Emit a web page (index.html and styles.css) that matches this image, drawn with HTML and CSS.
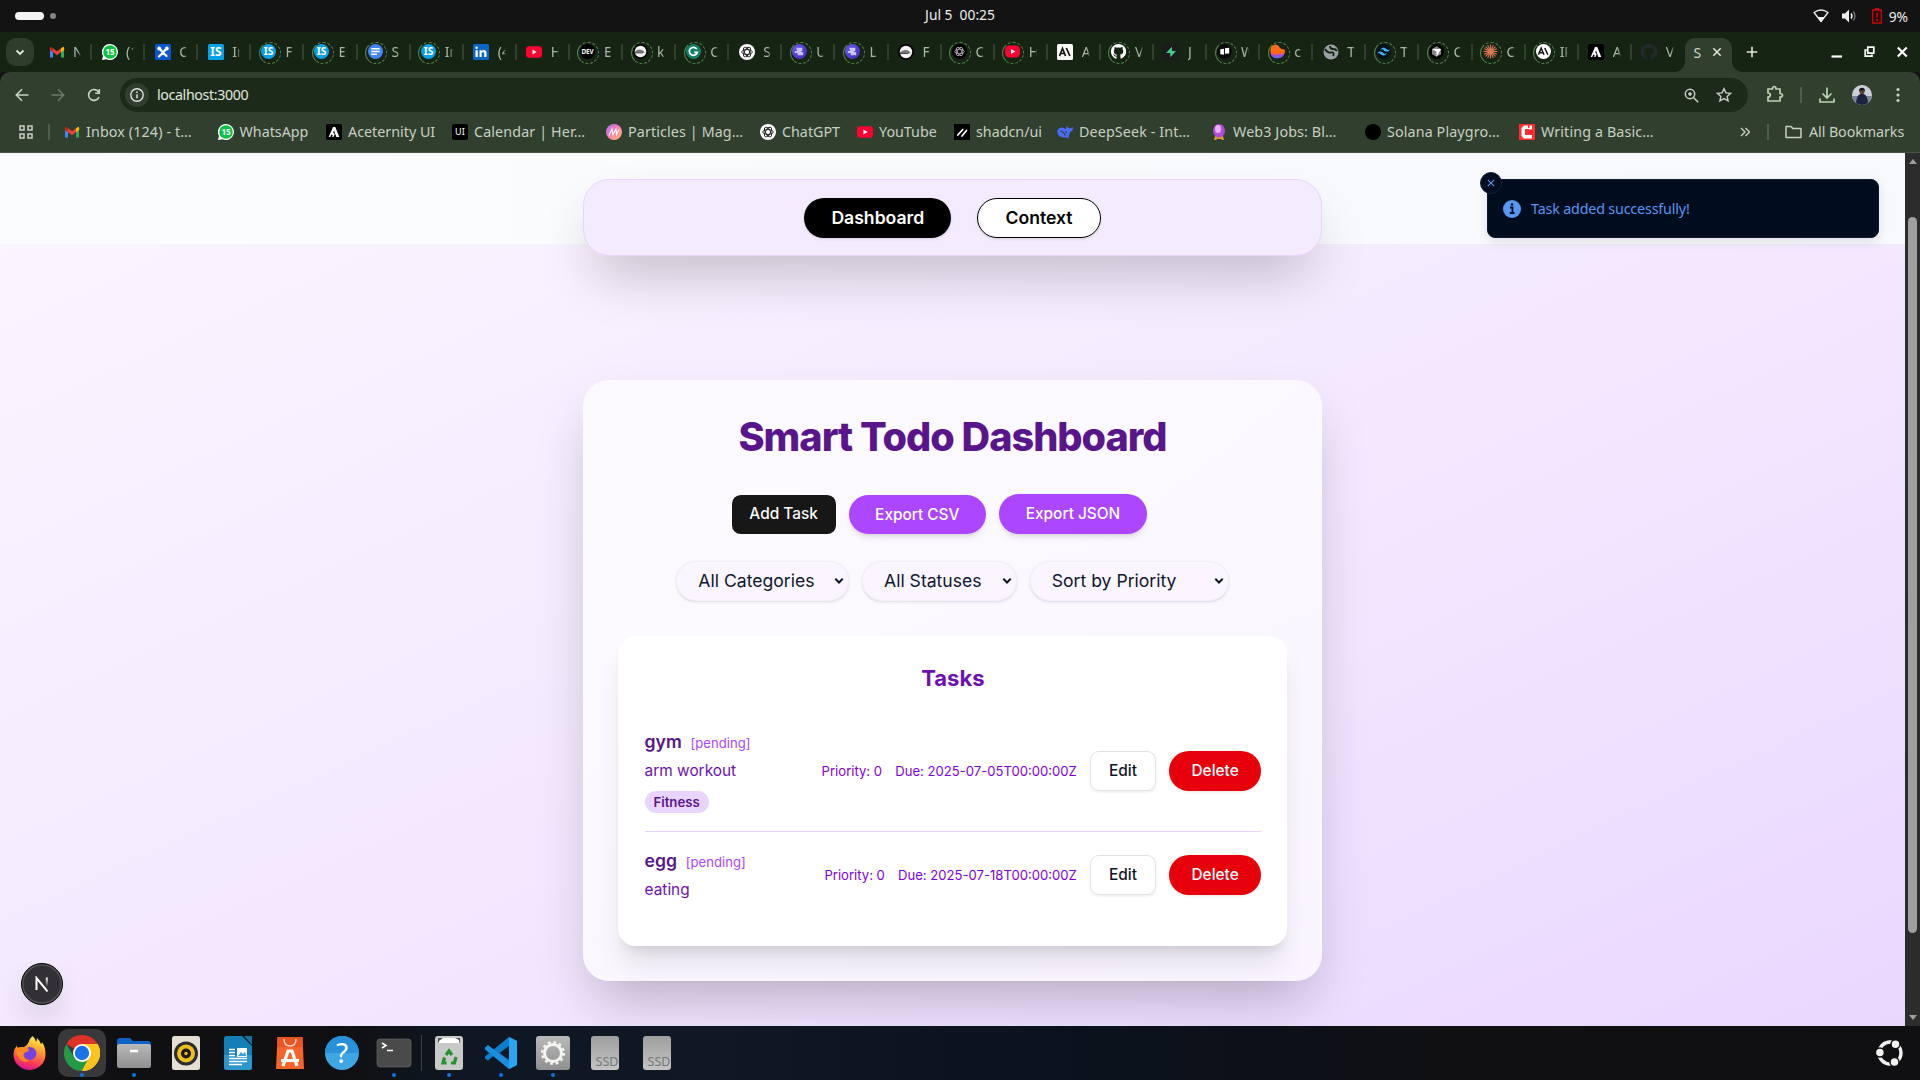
FILE: index.html
```html
<!DOCTYPE html>
<html lang="en">
<head>
<meta charset="utf-8">
<title>Smart Todo</title>
<link rel="stylesheet" href="styles.css">
</head>
<body>
<svg class="paints" aria-hidden="true">
  <defs>
    <linearGradient id="g-fire" x1="0.7" y1="0" x2="0.4" y2="1"><stop offset="0" stop-color="#fff44f"/><stop offset=".4" stop-color="#ff9a2b"/><stop offset=".75" stop-color="#ff4052"/><stop offset="1" stop-color="#d6129b"/></linearGradient>
    <linearGradient id="g-grey" x1="0" y1="0" x2="0" y2="1"><stop offset="0" stop-color="#b9b9b9"/><stop offset="1" stop-color="#8f8f8f"/></linearGradient>
    <linearGradient id="g-disk" x1="0" y1="0" x2="0" y2="1"><stop offset="0" stop-color="#9e9e9e"/><stop offset="1" stop-color="#c4c4c4"/></linearGradient>
    <linearGradient id="g-magic" x1="0" y1="0" x2="1" y2="1"><stop offset="0" stop-color="#a070ff"/><stop offset=".5" stop-color="#ff7fb0"/><stop offset="1" stop-color="#ffc060"/></linearGradient>
    <linearGradient id="g-flame" x1="0" y1="0" x2="0" y2="1"><stop offset="0" stop-color="#ff2fa0"/><stop offset="1" stop-color="#5a6bff"/></linearGradient>
    <linearGradient id="g-violet" x1="0" y1="0" x2="1" y2="1"><stop offset="0" stop-color="#6f5cf0"/><stop offset="1" stop-color="#3d24b8"/></linearGradient>
    <linearGradient id="g-n" x1="0" y1="0" x2="0" y2="1"><stop offset="0" stop-color="#fff"/><stop offset="1" stop-color="#fff" stop-opacity="0"/></linearGradient>
  </defs>
</svg>
<svg class="sprite" aria-hidden="true">
  <symbol id="gmail" viewBox="0 0 16 16"><path d="M1 4v9.500h3V7z" fill="#4285f4"/><path d="M15 4v9.500h-3V7z" fill="#34a853"/><path d="M12 4.500 14 2.700q1.200 0 1.200 1.800V6L12 8z" fill="#fbbc04"/><path d="M4 4.500 2 2.700Q.8 2.700.8 4.500V6L4 8z" fill="#c5221f"/><path d="M4 4.200 8 7.300l4-3.100V8l-4 3.200L4 8z" fill="#ea4335"/></symbol>
  <symbol id="whatsapp" viewBox="0 0 16 16"><path d="M8 0a8 8 0 1 1-3.500 15.200L0 16l1-4A8 8 0 0 1 8 0z" fill="#fff"/><circle cx="8" cy="8" r="6.800" fill="#0cc143"/><text x="8" y="11" text-anchor="middle" font-size="8" font-weight="700" fill="#fff">15</text></symbol>
  <symbol id="bluex" viewBox="0 0 16 16"><rect width="16" height="16" rx="1.500" fill="#0b57d0"/><path d="M4.500 4.500 8 8.500l-4 4M11.500 4.500 8 8.500l3.500 3.500" fill="none" stroke="#fff" stroke-width="2.200" stroke-linecap="round"/><circle cx="4.200" cy="4.500" r="1.900" fill="#fff"/><circle cx="11.800" cy="4.500" r="1.900" fill="#fff"/></symbol>
  <symbol id="is" viewBox="0 0 16 16"><rect width="16" height="16" rx="1.500" fill="#06a1ea"/><text x="8" y="12.300" text-anchor="middle" font-size="12" font-weight="700" fill="#fff">IS</text></symbol>
  <symbol id="isr" viewBox="0 0 16 16"><circle cx="8" cy="8" r="8" fill="#06a1ea"/><text x="8" y="12" text-anchor="middle" font-size="11" font-weight="700" fill="#fff">IS</text></symbol>
  <symbol id="doc" viewBox="0 0 16 16"><circle cx="8" cy="8" r="8" fill="#4285f4"/><path d="M3.500 5h9M3.500 8h9M3.500 11h6" stroke="#fff" stroke-width="1.700"/></symbol>
  <symbol id="linkedin" viewBox="0 0 16 16"><rect width="16" height="16" rx="1.500" fill="#0a66c2"/><path d="M2.500 6.200h2.300V13H2.500zM6.500 6.200h2.200v1q.8-1.200 2.300-1.200 2.500 0 2.500 3V13h-2.300V9.500q0-1.500-1.200-1.500-1.300 0-1.300 1.600V13H6.500z" fill="#fff"/><circle cx="3.600" cy="3.800" r="1.300" fill="#fff"/></symbol>
  <symbol id="youtube" viewBox="0 0 16 16"><rect y="2.300" width="16" height="11.500" rx="3" fill="#ff0033"/><path d="M6.500 5.600v4.800L10.700 8z" fill="#fff"/></symbol>
  <symbol id="youtuber" viewBox="0 0 16 16"><rect x="0" y="1.500" width="16" height="13" rx="4.500" fill="#ff0033"/><path d="M6.300 5.300v5.400L11 8z" fill="#fff"/></symbol>
  <symbol id="dev" viewBox="0 0 16 16"><circle cx="8" cy="8" r="8" fill="#000"/><text x="8" y="11" text-anchor="middle" font-size="8" font-weight="700" fill="#fff" textLength="13" lengthAdjust="spacingAndGlyphs">DEV</text></symbol>
  <symbol id="bot" viewBox="0 0 16 16"><circle cx="8" cy="8" r="8" fill="#050505"/><circle cx="8" cy="8" r="6.200" fill="#f2f2f2"/><path d="M1.900 9.200V8.500Q4 5.500 8.500 6q2.800.3 4.300 3.200z" fill="#777"/><path d="M2 9.500h8.500" stroke="#222" stroke-width=".8"/></symbol>
  <symbol id="grammarly" viewBox="0 0 16 16"><circle cx="8" cy="8" r="8" fill="#11806a"/><path d="M11.500 5.500A4.300 4.300 0 1 0 12 9H8.800" fill="none" stroke="#fff" stroke-width="1.800"/></symbol>
  <symbol id="gpt" viewBox="0 0 16 16"><circle cx="8" cy="8" r="8" fill="#fff"/><g fill="none" stroke="#222" stroke-width=".9"><ellipse cx="8" cy="8" rx="5.300" ry="2.500"/><ellipse cx="8" cy="8" rx="5.300" ry="2.500" transform="rotate(60 8 8)"/><ellipse cx="8" cy="8" rx="5.300" ry="2.500" transform="rotate(120 8 8)"/></g></symbol>
  <symbol id="gptd" viewBox="0 0 16 16"><circle cx="8" cy="8" r="8" fill="#000"/><g fill="none" stroke="#bbb" stroke-width=".9"><ellipse cx="8" cy="8" rx="5" ry="2.300"/><ellipse cx="8" cy="8" rx="5" ry="2.300" transform="rotate(60 8 8)"/><ellipse cx="8" cy="8" rx="5" ry="2.300" transform="rotate(120 8 8)"/></g></symbol>
  <symbol id="linear" viewBox="0 0 16 16"><circle cx="8" cy="8" r="8" fill="url(#g-violet)"/><path d="M4.500 4h6.500v3.500H9l3 1.500v3H6V9.500H3V7.500h2.500z" fill="#c9c4ff"/></symbol>
  <symbol id="anthropic" viewBox="0 0 16 16"><rect width="16" height="16" rx="1.500" fill="#faf9f5"/><path d="M2.500 12 5.500 4.500 8.500 12M3.700 9.500h3.600M9.300 4l3.600 8" fill="none" stroke="#141413" stroke-width="1.700"/></symbol>
  <symbol id="anthropicr" viewBox="0 0 16 16"><circle cx="8" cy="8" r="8" fill="#fff"/><path d="M2.500 11.500 5.500 4.500 8.500 11.500M3.700 9.300h3.600M9.300 4.300l3.400 7.200" fill="none" stroke="#141413" stroke-width="1.600"/></symbol>
  <symbol id="github" viewBox="0 0 16 16"><path d="M8 0a8 8 0 0 0-2.600 15.600c.4.100.6-.2.600-.4v-1.900c-2 .3-2.700-.7-2.900-1.400-.2-.4-.5-.8-.9-1 .8-.2 1.400.3 1.800.9.600.9 1.400.8 2 .6.100-.4.300-.8.500-1C4.500 11 3 10 3 7.600c0-.9.300-1.600.8-2.200-.1-.3-.3-1.100.1-2.200 0 0 .8-.2 2.200.8a7.600 7.600 0 0 1 3.900 0c1.400-1 2.200-.8 2.200-.8.400 1.100.2 1.900.1 2.200.5.600.8 1.300.8 2.200 0 2.400-1.500 3.400-3.500 3.700.3.300.5.700.5 1.500v2.400c0 .2.200.5.600.4A8 8 0 0 0 8 0z" fill="currentColor"/></symbol>
  <symbol id="supabase" viewBox="0 0 16 16"><rect width="16" height="16" rx="1" fill="#1c1c1c"/><path d="M9 2.700v4.300h4L7.300 13.300V9H3z" fill="#3ecf8e"/></symbol>
  <symbol id="boxes" viewBox="0 0 16 16"><circle cx="8" cy="8" r="8" fill="#0b0b0b"/><path d="M3.500 5.500 7.500 5v6.500l-4-.5zM8.500 4.500l4.500-.5v6l-4.500.5z" fill="#fff"/></symbol>
  <symbol id="flame" viewBox="0 0 16 16"><path d="M1 8h15a8 8 0 0 1-15.500 2z" fill="url(#g-flame)"/><path d="M1 10Q-1 3 4 1q3-1.500 5.500 1.500Q11 6 16 6q0 5-5 4.500-5 1.500-10-.5z" fill="#ff6a1a"/></symbol>
  <symbol id="globe" viewBox="0 0 16 16"><circle cx="8" cy="8" r="7.500" fill="#9aa0a6"/><path d="M2 5q2 4 6 3.500T10 12M7 2q0 3 3 3t4 2" fill="none" stroke="#162413" stroke-width="1.800"/></symbol>
  <symbol id="tailwind" viewBox="0 0 16 16"><circle cx="8" cy="8" r="8" fill="#07121c"/><path transform="translate(1.200 1.200) scale(.57)" fill="#38bdf8" d="M12 4.800c-3.200 0-5.200 1.600-6 4.800 1.200-1.600 2.600-2.200 4.200-1.800.913.228 1.565.89 2.288 1.624C13.666 10.618 15.027 12 18 12c3.200 0 5.200-1.600 6-4.800-1.200 1.600-2.600 2.200-4.200 1.800-.913-.228-1.565-.89-2.288-1.624C16.337 6.182 14.976 4.800 12 4.800zM6 12c-3.200 0-5.200 1.600-6 4.800 1.200-1.600 2.600-2.200 4.200-1.800.913.228 1.565.89 2.288 1.624C7.666 17.818 9.027 19.200 12 19.200c3.200 0 5.200-1.600 6-4.800-1.200 1.600-2.600 2.200-4.200 1.800-.913-.228-1.565-.89-2.288-1.624C10.337 13.382 8.976 12 6 12z"/></symbol>
  <symbol id="cursor" viewBox="0 0 16 16"><circle cx="8" cy="8" r="8" fill="#000"/><path d="m8 2.500 4.800 2.700v5.600L8 13.500l-4.800-2.700V5.200z" fill="#888"/><path d="M3.200 5.200h9.600L8 13.500V8z" fill="#fff"/></symbol>
  <symbol id="claude" viewBox="0 0 16 16"><g stroke="#d97757" stroke-width="1.200"><path d="M8 .5v15M.5 8h15M2.700 2.700l10.600 10.600M13.300 2.700 2.700 13.300M5 1.200l6 13.600M11 1.200 5 14.800M1.200 5l13.600 6M14.800 5 1.200 11"/></g></symbol>
  <symbol id="acet" viewBox="0 0 16 16"><rect width="16" height="16" rx="2" fill="#000"/><path d="M7 3h2.300l4 10h-3L8 6.500l-.8 2 1.500 1.500L7.500 13H6.200l.5-1.800-1.500-.7-.9 2.500H2.700z" fill="#fff"/></symbol>
  <symbol id="ui" viewBox="0 0 16 16"><rect width="16" height="16" rx="2.500" fill="#000"/><text x="8" y="11.200" text-anchor="middle" font-size="9" fill="#fff">UI</text></symbol>
  <symbol id="magic" viewBox="0 0 16 16"><circle cx="8" cy="8" r="8" fill="url(#g-magic)"/><path d="M3 11.500 6 5 7 10.500 10 5l.5 5.500L13 5.500" fill="none" stroke="#fff" stroke-width="1.100"/></symbol>
  <symbol id="shadcn" viewBox="0 0 16 16"><rect width="16" height="16" rx="1" fill="#000"/><path d="m3.800 11 5-5.500M8 12l4.500-5.500" stroke="#fff" stroke-width="1.700" stroke-linecap="round"/></symbol>
  <symbol id="deepseek" viewBox="0 0 16 16"><path d="M.3 6.500Q2 3 6 3.700q1.500.3 2.500 1.800Q9.500 3 10 2q.8 1.800 2.500 2.300Q14.500 4.500 16 3q0 4.500-3 5-.3 3-1.800 4 .8.500 1.300 1.500-2 .7-3.500-.3-3 1-5.700-.7Q0 10.500.3 6.500z" fill="#4d6bfe"/><path d="M3.500 7q3 .5 5 4.500M8.500 7.500l1.500 1" fill="none" stroke="#303f2e" stroke-width="1.100"/></symbol>
  <symbol id="crystal" viewBox="0 0 16 16"><path d="M4 12h8l1 4h-2.500v-1h-5v1H3z" fill="#d69a35"/><ellipse cx="8" cy="6.800" rx="6" ry="6.800" fill="#b24bd6"/><ellipse cx="7" cy="5" rx="3" ry="4" fill="#eab0f5"/></symbol>
  <symbol id="dot" viewBox="0 0 16 16"><circle cx="8" cy="8" r="8" fill="#000"/></symbol>
  <symbol id="redc" viewBox="0 0 16 16"><rect width="16" height="16" fill="#ff2d2d"/><path d="M13 1.500v4h-3V5H6v6h7v3.500H5L2.500 12V4L5 1.500h4V4h1.500V1.500z" fill="#fff"/></symbol>
</svg>

<header class="topbar">
  <div class="workspaces"><i class="pill"></i><i class="spot"></i></div>
  <div class="clock">Jul 5&nbsp; 00:25</div>
  <div class="status">
    <svg width="16" height="16" viewBox="0 0 16 16"><path d="M1 4.500Q8-.5 15 4.500L8 13.500z" fill="none" stroke="#eee" stroke-width="1.300" stroke-linejoin="round"/><path d="m4.500 9 3.500 5 3.500-5z" fill="#eee"/></svg>
    <svg width="16" height="16" viewBox="0 0 16 16"><path d="M1 5.500h3L8 1.500v13L4 10.500H1z" fill="#eee"/><path d="M10 5.500q2 2.500 0 5" fill="none" stroke="#eee" stroke-width="1.500"/><path d="M12.300 3.500q3.500 4.500 0 9" fill="none" stroke="#777" stroke-width="1.300"/></svg>
    <svg width="10" height="16" viewBox="0 0 10 16"><path d="M.7 2h8.600v13H.7zM3 .7h4" fill="#2c0404" stroke="#c50808" stroke-width="1.300"/><path d="M5 4.500v5M5 11v2" stroke="#c50808" stroke-width="1.700"/></svg>
    <span>9%</span>
  </div>
</header>

<div class="tabstrip">
  <div class="tabsearch"><svg width="10" height="10" viewBox="0 0 10 10"><path d="m1.500 3.500 3.500 3.500 3.500-3.500" fill="none" stroke="#dfe8da" stroke-width="1.800"/></svg></div>
  <div class="tabs">
    <div class="tab"><svg><use href="#gmail"/></svg><b>N</b></div>
    <div class="tab"><svg><use href="#whatsapp"/></svg><b>(1</b></div>
    <div class="tab"><svg><use href="#bluex"/></svg><b>C</b></div>
    <div class="tab"><svg><use href="#is"/></svg><b>In</b></div>
    <div class="tab idle"><svg><use href="#isr"/></svg><b>F</b></div>
    <div class="tab idle"><svg><use href="#isr"/></svg><b>E</b></div>
    <div class="tab idle"><svg><use href="#doc"/></svg><b>S</b></div>
    <div class="tab idle"><svg><use href="#isr"/></svg><b>In</b></div>
    <div class="tab"><svg><use href="#linkedin"/></svg><b>(4</b></div>
    <div class="tab"><svg><use href="#youtube"/></svg><b>H</b></div>
    <div class="tab idle"><svg><use href="#dev"/></svg><b>E</b></div>
    <div class="tab idle"><svg><use href="#bot"/></svg><b>k</b></div>
    <div class="tab idle"><svg><use href="#grammarly"/></svg><b>C</b></div>
    <div class="tab"><svg><use href="#gpt"/></svg><b>S</b></div>
    <div class="tab idle"><svg><use href="#linear"/></svg><b>U</b></div>
    <div class="tab idle"><svg><use href="#linear"/></svg><b>L</b></div>
    <div class="tab"><svg><use href="#bot"/></svg><b>F</b></div>
    <div class="tab idle"><svg><use href="#gptd"/></svg><b>C</b></div>
    <div class="tab idle"><svg><use href="#youtuber"/></svg><b>H</b></div>
    <div class="tab"><svg><use href="#anthropic"/></svg><b>A</b></div>
    <div class="tab idle white"><svg><use href="#github"/></svg><b>V</b></div>
    <div class="tab"><svg><use href="#supabase"/></svg><b>J</b></div>
    <div class="tab idle"><svg><use href="#boxes"/></svg><b>W</b></div>
    <div class="tab idle"><svg><use href="#flame"/></svg><b>c</b></div>
    <div class="tab"><svg><use href="#globe"/></svg><b>T</b></div>
    <div class="tab idle"><svg><use href="#tailwind"/></svg><b>T</b></div>
    <div class="tab idle"><svg><use href="#cursor"/></svg><b>C</b></div>
    <div class="tab idle"><svg><use href="#claude"/></svg><b>C</b></div>
    <div class="tab idle"><svg><use href="#anthropicr"/></svg><b>IP</b></div>
    <div class="tab"><svg><use href="#acet"/></svg><b>A</b></div>
    <div class="tab dark last"><svg><use href="#github"/></svg><b>V</b></div>
  </div>
  <div class="tab-active"><b>S</b><svg width="10" height="10" viewBox="0 0 10 10"><path d="m1.300 1.300 7.400 7.400m0-7.400-7.400 7.400" stroke="#dfe8da" stroke-width="1.500"/></svg></div>
  <svg class="newtab" width="12" height="12" viewBox="0 0 12 12"><path d="M6 .7v10.600M.7 6h10.600" stroke="#dfe8da" stroke-width="1.600"/></svg>
  <div class="winctl">
    <svg width="12" height="12" viewBox="0 0 12 12"><path d="M.5 10.500h10.500" stroke="#fff" stroke-width="2.200"/></svg>
    <svg width="12" height="12" viewBox="0 0 12 12"><path d="M3.800 1.200h6v6h-6zM3 4H1.200v6.200H8V8.500" fill="none" stroke="#fff" stroke-width="1.700"/></svg>
    <svg width="12" height="12" viewBox="0 0 12 12"><path d="m1.800 1.500 9 9m0-9-9 9" stroke="#fff" stroke-width="2.200"/></svg>
  </div>
</div>

<div class="toolbar">
  <div class="navbtns">
    <svg width="14" height="14" viewBox="0 0 14 14"><path d="M13.500 7H1.500M7 1.300 1.300 7 7 12.700" fill="none" stroke="#c5d5bf" stroke-width="1.600"/></svg>
    <svg width="14" height="14" viewBox="0 0 14 14"><path d="M.5 7h12M7 1.300 12.700 7 7 12.700" fill="none" stroke="#6b7a68" stroke-width="1.600"/></svg>
    <svg width="14" height="14" viewBox="0 0 14 14"><path d="M12 9a5.400 5.400 0 1 1-.5-5M12.300 1v4.200H8.200" fill="none" stroke="#c5d5bf" stroke-width="1.600"/></svg>
  </div>
  <div class="omnibox">
    <span class="info"><svg width="14" height="14" viewBox="0 0 14 14"><circle cx="7" cy="7" r="6.200" fill="none" stroke="#dfe5db" stroke-width="1.400"/><path d="M7 6.200v4M7 3.500v1.400" stroke="#dfe5db" stroke-width="1.500"/></svg></span>
    <span class="url">localhost:3000</span>
    <svg class="mag" width="15" height="15" viewBox="0 0 15 15"><circle cx="6" cy="6" r="4.700" fill="none" stroke="#c9cfc4" stroke-width="1.500"/><path d="m9.500 9.500 4.700 4.700M6 4v4M4 6h4" stroke="#c9cfc4" stroke-width="1.500"/></svg>
    <svg width="16" height="16" viewBox="0 0 16 16"><path d="m8 1.700 1.900 4.200 4.600.5-3.400 3 1 4.500L8 11.600l-4.100 2.300 1-4.500-3.400-3 4.600-.5z" fill="none" stroke="#c9cfc4" stroke-width="1.400"/></svg>
  </div>
  <svg class="ext" width="18" height="18" viewBox="0 0 18 18"><path d="M2 4h4.500q0-2.500 1.700-2.500T10 4h4v4.500q2.500 0 2.500 1.700T14 12v4H2v-4q2.300 0 2.300-2T2 8z" fill="none" stroke="#b9d3b2" stroke-width="1.700"/></svg>
  <i class="bar"></i>
  <svg class="dl" width="16" height="16" viewBox="0 0 16 16"><path d="M8 .5v10M3.500 6.500 8 11l4.500-4.500M1 11.500V15h14v-3.500" fill="none" stroke="#b9d3b2" stroke-width="1.700"/></svg>
  <svg class="avatar" width="20" height="20" viewBox="0 0 20 20"><clipPath id="av"><circle cx="10" cy="10" r="10"/></clipPath><g clip-path="url(#av)"><path d="M0 0h20v20H0z" fill="#cbd0d8"/><path d="M0 11h20v9H0z" fill="#7b8496"/><path d="M4 20q0-10 4.500-11h3Q16 10 16 20z" fill="#1d2440"/><circle cx="10" cy="6.500" r="2.600" fill="#5b4038"/><path d="M7 6q0-3.300 3-3.300T13 6q-3-1.500-6 0z" fill="#15151a"/></g></svg>
  <svg class="more" width="4" height="16" viewBox="0 0 4 16"><g fill="#c5d5bf"><circle cx="2" cy="2.500" r="1.600"/><circle cx="2" cy="8" r="1.600"/><circle cx="2" cy="13.500" r="1.600"/></g></svg>
</div>

<div class="bookmarks">
  <svg class="apps" width="14" height="14" viewBox="0 0 14 14"><path d="M1 1h4v4H1zM9 1h4v4H9zM1 9h4v4H1zM9 9h4v4H9z" fill="none" stroke="#c9cfc4" stroke-width="1.500"/></svg>
  <i class="bar"></i>
  <div class="marks">
    <a class="long"><svg><use href="#gmail"/></svg>Inbox (124) - t…</a>
    <a><svg><use href="#whatsapp"/></svg>WhatsApp</a>
    <a><svg><use href="#acet"/></svg>Aceternity UI</a>
    <a class="long"><svg><use href="#ui"/></svg>Calendar | Her…</a>
    <a class="long"><svg><use href="#magic"/></svg>Particles | Mag…</a>
    <a><svg><use href="#gpt"/></svg>ChatGPT</a>
    <a><svg><use href="#youtube"/></svg>YouTube</a>
    <a><svg><use href="#shadcn"/></svg>shadcn/ui</a>
    <a class="long"><svg><use href="#deepseek"/></svg>DeepSeek - Int…</a>
    <a class="long"><svg><use href="#crystal"/></svg>Web3 Jobs: Bl…</a>
    <a class="long"><svg><use href="#dot"/></svg>Solana Playgro…</a>
    <a class="long"><svg><use href="#redc"/></svg>Writing a Basic…</a>
  </div>
  <svg class="chev" width="10" height="10" viewBox="0 0 10 10"><path d="m1 1 4 4-4 4m4.500-8 4 4-4 4" fill="none" stroke="#c9cfc4" stroke-width="1.400"/></svg>
  <i class="bar"></i>
  <svg class="folder" width="17" height="14" viewBox="0 0 17 14"><path d="M1 1.500h5l1.700 2H16v9H1z" fill="none" stroke="#c9cfc4" stroke-width="1.500" stroke-linejoin="round"/></svg>
  <span class="allb">All Bookmarks</span>
</div>

<div class="viewport">
  <div class="page">
    <div class="head"></div>
    <main class="canvas">
      <nav class="pagenav"><a class="on">Dashboard</a><a class="off">Context</a></nav>
      <section class="card">
        <h1>Smart Todo Dashboard</h1>
        <div class="actions"><button class="add">Add Task</button><button class="export csv">Export CSV</button><button class="export json">Export JSON</button></div>
        <div class="filters">
          <div class="select cat">All Categories<svg width="10" height="8" viewBox="0 0 10 8"><path d="m1.300 1.800 3.700 3.700 3.700-3.700" fill="none" stroke="#0f172b" stroke-width="2"/></svg></div>
          <div class="select stat">All Statuses<svg width="10" height="8" viewBox="0 0 10 8"><path d="m1.300 1.800 3.700 3.700 3.700-3.700" fill="none" stroke="#0f172b" stroke-width="2"/></svg></div>
          <div class="select sort">Sort by Priority<svg width="10" height="8" viewBox="0 0 10 8"><path d="m1.300 1.800 3.700 3.700 3.700-3.700" fill="none" stroke="#0f172b" stroke-width="2"/></svg></div>
        </div>
        <div class="tasks">
          <h2>Tasks</h2>
          <div class="task">
            <div class="what"><div class="name">gym<span>[pending]</span></div><div class="desc">arm workout</div><div class="tag">Fitness</div></div>
            <div class="meta"><span>Priority: 0</span><span>Due: 2025-07-05T00:00:00Z</span><button class="edit">Edit</button><button class="del">Delete</button></div>
          </div>
          <div class="task">
            <div class="what"><div class="name">egg<span>[pending]</span></div><div class="desc">eating</div></div>
            <div class="meta"><span>Priority: 0</span><span>Due: 2025-07-18T00:00:00Z</span><button class="edit">Edit</button><button class="del">Delete</button></div>
          </div>
        </div>
      </section>
    </main>
    <div class="toast">
      <span class="close"><svg width="8" height="8" viewBox="0 0 8 8"><path d="m.8.8 6.400 6.400m0-6.400L.8 7.200" stroke="#5896f3" stroke-width="1.100"/></svg></span>
      <svg width="18" height="18" viewBox="0 0 18 18"><circle cx="9" cy="9" r="9" fill="#5896f3"/><path d="M7 7.500h2.500v5.300M6.800 13h4.700" fill="none" stroke="#000d1f" stroke-width="1.800"/><circle cx="9" cy="4.500" r="1.200" fill="#000d1f"/></svg>
      <span class="msg">Task added successfully!</span>
    </div>
    <div class="nextdev"><svg width="14" height="16" viewBox="0 0 14 16"><path d="M1.500 14V2L12.500 15.500" fill="none" stroke="#fff" stroke-width="2"/><path d="M10.800 1.500h2V11h-2z" fill="url(#g-n)"/></svg></div>
  </div>
  <div class="scrollbar"><i class="up"></i><i class="thumb"></i><i class="down"></i></div>
</div>

<footer class="dock">
  <div class="app"><svg viewBox="0 0 36 36"><path d="M20.500 1q2.500 2 3.500 6 1-2 1-4 3 3 4 6 1-.5 1-2 3.500 5 3.500 12a16 15.500 0 1 1-32 1q0-6 3.500-9.500 0 2 1 3 3-2 6-1.500 3-1 4.500-4.500 1-4 4-6.500z" fill="url(#g-fire)"/><circle cx="18" cy="18.500" r="6.500" fill="#7542e5"/><path d="M4 13q7-2 11 0 3 1 1 3.500-4 .5-5 3.500 1 5 7 5.500-7 3.500-11-2.500-3-4-3-10z" fill="#ff8a1f"/></svg></div>
  <div class="app focus run"><svg viewBox="0 0 36 36"><path d="M18 18 2.400 9A18 18 0 0 1 33.600 9z" fill="#dd3227"/><path d="M18 18V9h15.600A18 18 0 0 1 18 36z" fill="#fcc31c"/><path d="M18 36A18 18 0 0 1 2.400 9l7.800 13.500L18 27l7-5z" fill="#249a47"/><path d="M25.800 22.500 18 36A18 18 0 0 0 33.600 9H18z" fill="#fcc31c"/><circle cx="18" cy="18" r="9" fill="#fff"/><circle cx="18" cy="18" r="7.200" fill="#1a73e8"/></svg></div>
  <div class="app run"><svg viewBox="0 0 36 36"><path d="M1 6q0-3 3-3h10l3 3h15q3 0 3 3v8H1z" fill="#0d62c5"/><rect x="1" y="9" width="34" height="24" rx="2.500" fill="url(#g-grey)"/><path d="M14 16h8" stroke="#fff" stroke-width="2.500"/></svg></div>
  <div class="app"><svg viewBox="0 0 36 36"><rect x="4" y="1" width="28" height="34" rx="2.500" fill="#e4ded3"/><circle cx="18" cy="18.500" r="12" fill="#2c2c2c"/><circle cx="18" cy="18.500" r="9" fill="#efbf1e"/><circle cx="18" cy="18.500" r="5" fill="#1c1a14"/><circle cx="18" cy="18.500" r="1.700" fill="#efbf1e"/></svg></div>
  <div class="app"><svg viewBox="0 0 36 36"><path d="M6.500 1H22l10 10v21.500q0 2.500-2.500 2.500h-23Q4 35 4 32.500v-29Q4 1 6.500 1z" fill="#147fb4"/><path d="M4 20h28v12q0 3-3 3H7q-3 0-3-3z" fill="#2d97cc"/><path d="M24 1h8v9z" fill="#1672a5"/><path d="M9 14.500h6M9 17.500h6M9 20.500h6M9 23.500h18M9 26.500h18M9 29.500h13" stroke="#fff" stroke-width="1.600"/><path d="M17 13h10v9H17z" fill="#fff"/><path d="m18 21 3-4 2 2 2-2 1.500 4z" fill="#36a3dc"/></svg></div>
  <div class="app"><svg viewBox="0 0 36 36"><path d="M5.500 2h25L32 34H4z" fill="#f4652c"/><path d="M5.500 2h25l.5 10H5z" fill="#e95420"/><path d="M12 4q0 7 6 7t6-7" fill="none" stroke="#fbd0be" stroke-width="1.600"/><path d="m11 31 5-15h4l5 15M9 25.500h18" fill="none" stroke="#fff" stroke-width="3.200"/></svg></div>
  <div class="app"><svg viewBox="0 0 36 36"><circle cx="18" cy="18" r="17" fill="#40a5e3"/><path d="M1 18a17 17 0 0 1 34 0z" fill="#2790d9"/><text x="18" y="28" text-anchor="middle" font-size="28" fill="#fff">?</text></svg></div>
  <div class="app run"><svg viewBox="0 0 36 36"><rect x="1" y="4" width="34" height="28" rx="3" fill="#4a4a4a" stroke="#666" stroke-width=".7"/><path d="m6 8 4 2.500L6 13M11 15.500h6" fill="none" stroke="#fff" stroke-width="1.600"/></svg></div>
  <i class="rule"></i>
  <div class="app run"><svg viewBox="0 0 36 36"><rect x="4" y="1" width="28" height="34" rx="3" fill="#c9c9c9"/><path d="M7 3h22v4.500H7z" fill="#555"/><path d="m8 6 4-3h12l4 2v3H8z" fill="#fff"/><g fill="none" stroke="#23912f" stroke-width="3.200"><path d="m15 20 3-4 3 4M25 22l-1.500 6H20M15.500 28H12l1.500-5.500"/></g></svg></div>
  <div class="app run"><svg viewBox="0 0 36 36"><path d="M26 2 34 6v24l-8 4L11 20.500 5 25.500l-3-2v-2L26 2z" fill="#0d7fca"/><path d="m2 12.500 3-2.500 21 16.500V34L2 14.500z" fill="#1b8ede"/><path d="m26 2 8 4v24l-8 4z" fill="#29a5f4"/><path d="M26 11v14l-9.500-7z" fill="#101a27"/></svg></div>
  <div class="app run"><svg viewBox="0 0 36 36"><rect x="1" y="1" width="34" height="34" rx="3" fill="url(#g-grey)"/><circle cx="18" cy="18" r="8.500" fill="none" stroke="#f5f5f2" stroke-width="3"/><circle cx="18" cy="18" r="10.800" fill="none" stroke="#f5f5f2" stroke-width="2.500" stroke-dasharray="2.830 2.830"/></svg></div>
  <div class="app"><svg viewBox="0 0 36 36"><rect x="4" y="1" width="28" height="34" rx="3" fill="url(#g-disk)"/><text x="20" y="31" text-anchor="middle" font-size="12.500" fill="#777">SSD</text></svg></div>
  <div class="app"><svg viewBox="0 0 36 36"><rect x="4" y="1" width="28" height="34" rx="3" fill="url(#g-disk)"/><text x="20" y="31" text-anchor="middle" font-size="12.500" fill="#777">SSD</text></svg></div>
  <svg class="ubuntu" width="28" height="28" viewBox="0 0 28 28"><circle cx="14" cy="14" r="11" fill="none" stroke="#f2f2f2" stroke-width="3.400"/><g fill="#f2f2f2" stroke="#101012" stroke-width="1.500"><circle cx="3.900" cy="13.500" r="4.500"/><circle cx="19.500" cy="5.200" r="4.500"/><circle cx="18.500" cy="23" r="4.500"/></g></svg>
</footer>
</body>
</html>
```
FILE: styles.css
```css
* { box-sizing: border-box; }
body { margin: 0; width: 1920px; height: 1080px; overflow: hidden; display: flex; flex-direction: column; font-family: "Noto Sans", sans-serif; background: #131313; }
svg { display: block; flex: none; }
i { display: block; flex: none; }
.paints { position: absolute; width: 0; height: 0; }
.sprite { display: none; }
symbol text { font-family: "Noto Sans", sans-serif; }

/* system bar */
.topbar { height: 32px; background: #131313; color: #efefef; display: grid; grid-template-columns: 1fr auto 1fr; align-items: center; font-size: 13.8px; letter-spacing: 0; }
.workspaces { display: flex; align-items: center; gap: 6px; padding-left: 15px; }
.pill { width: 29px; height: 8px; border-radius: 4px; background: #f4f4f4; }
.spot { width: 6px; height: 6px; border-radius: 50%; background: #848484; }
.clock { line-height: 30px; padding-bottom: 2px; }
.status { display: flex; align-items: center; justify-content: flex-end; padding-right: 12px; }
.status svg + svg { margin-left: 12px; }
.status svg + svg + svg { margin-left: 15px; }
.status span { margin-left: 7px; }

/* tab strip */
.tabstrip { height: 40px; background: #162413; display: flex; align-items: center; color: #bcc7b7; }
.tabsearch { width: 28px; height: 28px; margin: 0 4px 0 6px; border-radius: 10px; background: #2e3d2c; display: grid; place-items: center; }
.tabs { display: flex; margin-top: -1px; }
.tab { width: 53.100px; height: 20px; display: flex; align-items: center; padding-left: 10.500px; position: relative; color: #bcc7b7; }
.tab svg { width: 16px; height: 16px; }
.tab b { font-weight: 400; font-size: 14px; width: 8px; margin-left: 8.500px; overflow: hidden; white-space: nowrap; opacity: .9; -webkit-mask-image: linear-gradient(90deg, #000 65%, transparent); mask-image: linear-gradient(90deg, #000 65%, transparent); }
.tab::after { content: ""; position: absolute; right: -1px; top: 2px; width: 2px; height: 16px; background: #2f402d; }
.tab.last::after { display: none; }
.tab.idle svg { width: 15px; height: 15px; margin: 0 .5px; }
.tab.idle::before { content: ""; position: absolute; left: 8.500px; top: 0; width: 20px; height: 20px; border-radius: 50%; border: 1.500px dashed #55824f; border-left-style: solid; }
.tab.white svg { color: #fff; }
.tab.dark svg { color: #24292f; }
.tab-active { align-self: flex-end; width: 47px; height: 34px; margin-left: 1.500px; border-radius: 10px 10px 0 0; background: #303f2e; display: flex; align-items: center; padding: 0 0 6px 8px; gap: 11px; position: relative; }
.tab-active b { font-weight: 400; font-size: 14px; width: 8px; overflow: hidden; color: #cfd8ca; }
.tab-active::before, .tab-active::after { content: ""; position: absolute; bottom: 0; width: 10px; height: 10px; }
.tab-active::before { left: -10px; background: radial-gradient(circle at 0 0, transparent 9.500px, #303f2e 10px); }
.tab-active::after { right: -10px; background: radial-gradient(circle at 100% 0, transparent 9.500px, #303f2e 10px); }
.newtab { margin-left: 14px; }
.winctl { margin-left: auto; display: flex; gap: 20.500px; padding-right: 12px; }

/* toolbar */
.toolbar { height: 40px; background: #303f2e; border-radius: 10px 10px 0 0; display: flex; align-items: flex-end; }
.toolbar > * { margin-bottom: 9px; }
.bar { width: 2px; height: 16px; background: #4c6049; }
.navbtns { display: flex; gap: 22px; padding-left: 15px; width: 120px; margin-bottom: 10px; }
.omnibox { width: 1628px; height: 34px; margin-bottom: 0; border-radius: 17px; background: #1c2a1a; display: flex; align-items: center; padding: 0 16px 0 5px; }
.info { width: 24px; height: 24px; border-radius: 50%; background: #303f2e; display: grid; place-items: center; }
.url { margin-left: 8px; padding-bottom: 2px; font-size: 14.200px; color: #e2e8de; letter-spacing: -.35px; }
.mag { margin-left: auto; margin-right: 17px; }
.ext { margin-left: 18px; }
.toolbar .bar { margin: 0 17px 9px 16px; }
.avatar { margin: 0 0 7px 17px; }
.more { margin-left: 24px; margin-bottom: 9px; }

/* bookmarks */
.bookmarks { height: 41px; background: #303f2e; border-bottom: 1px solid #475446; display: flex; align-items: center; color: #c9cfc4; font-size: 14.300px; padding-bottom: 1px; }
.apps { margin: 0 15px 0 19px; }
.marks { display: grid; grid-template-columns: 153.500px 108.500px 126px 154px 154px 97px 97px 103px 154px 154px 154px 150px; margin-left: 14px; width: 1672px; }
.marks a { display: flex; align-items: center; gap: 6px; white-space: nowrap; }
.marks .long { letter-spacing: .12px; }
.marks svg { width: 16px; height: 16px; }
.chev { margin-left: 4px; margin-right: 17px; }
.folder { margin: 0 7px 0 16px; }
.allb { white-space: nowrap; letter-spacing: -.08px; }

/* page */
.viewport { height: 873px; display: flex; background: #f8fafc; }
.page { width: 1905px; position: relative; overflow: hidden; font-family: Inter, sans-serif; }
.head { height: 90.500px; background: linear-gradient(90deg, #fafcfd, #f7f9fd); }
.canvas { height: 873px; background: linear-gradient(to bottom right, #faf5ff, #f3e8ff 50%, #e9d5ff); display: flex; flex-direction: column; align-items: center; }
.pagenav { width: 739px; height: 77px; margin-top: -64.500px; flex: none; border: 1px solid #e9d4ff; border-radius: 26.400px; background: #f4ebff; box-shadow: 0 27.500px 55px -13.200px rgba(0,0,0,.25); display: flex; justify-content: center; align-items: center; gap: 26px; }
.pagenav a { height: 40px; display: flex; align-items: center; padding: 0 27.200px; border-radius: 20px; font-weight: 600; font-size: 17.600px; box-shadow: 0 1.100px 3.300px rgba(0,0,0,.1), 0 1.100px 2.200px -1.100px rgba(0,0,0,.1); }
.pagenav .on { background: #000; color: #fff; }
.pagenav .off { background: #fff; color: #000; border: 1px solid #000; }
.card { width: 739px; height: 601px; margin-top: 124px; flex: none; border-radius: 26.400px; padding: 35.200px; background: linear-gradient(to bottom right, rgba(255,255,255,.7), rgba(255,255,255,.68)); box-shadow: 0 27.500px 55px -13.200px rgba(0,0,0,.25); }
h1 { margin: 0; text-align: center; font-size: 39.600px; line-height: 44px; font-weight: 800; letter-spacing: -.025em; color: #59168b; }
button { font-family: inherit; border: 0; padding: 0; display: block; font-size: 15.400px; font-weight: 500; }
.actions { display: flex; justify-content: center; align-items: flex-end; gap: 13.200px; padding-right: 26.400px; margin-top: 35px; height: 40px; }
.add { width: 104px; height: 39px; padding-bottom: 1.500px; border-radius: 8.800px; background: #171717; color: #fafafa; }
.export { height: 39px; width: 137px; border-radius: 20px; background: #ad46ff; color: #fff; box-shadow: 0 4.400px 6.600px -1.100px rgba(0,0,0,.1), 0 2.200px 4.400px -2.200px rgba(0,0,0,.1); }
.json { width: 148px; height: 40px; padding-bottom: 1px; }
.filters { display: flex; justify-content: center; gap: 13.200px; margin-top: 26.400px; }
.select { height: 40.500px; border-radius: 20px; background: #faf5ff; border: 1px solid #f3f0fc; padding: 0 4px 0 21px; font-size: 17.600px; color: #0f172b; display: flex; align-items: center; justify-content: space-between; box-shadow: 0 1.100px 3.300px rgba(0,0,0,.1), 0 1.100px 2.200px -1.100px rgba(0,0,0,.1); }
.cat { width: 172.500px; }
.stat { width: 154.500px; }
.sort { width: 199px; }
.tasks { height: 310px; margin-top: 35px; padding: 27.200px 25.700px 26px 26.400px; border-radius: 17.600px; background: #fff; box-shadow: 0 22px 27.500px -5.500px rgba(0,0,0,.1), 0 8.800px 11px -6.600px rgba(0,0,0,.1); }
h2 { margin: 0 0 17.600px; text-align: center; font-size: 22px; line-height: 30.800px; font-weight: 700; color: #6e11b0; }
.task { padding: 17.600px 0; display: flex; align-items: center; justify-content: space-between; }
.task + .task { border-top: 1px solid #e9d4ff; padding-top: 16.500px; }
.name { font-size: 17.600px; line-height: 26.400px; font-weight: 600; color: #59168b; }
.name span { margin-left: 8.800px; font-size: 13.100px; font-weight: 400; color: #ad46ff; }
.desc { font-size: 15.400px; line-height: 26.400px; padding-top: 1px; height: 26.400px; color: #6e11b0; }
.tag { display: inline-block; margin-top: 8px; height: 22px; line-height: 22px; padding: 0 8.900px; border-radius: 11px; background: #e9d4ff; color: #59168b; font-size: 13.200px; font-weight: 600; vertical-align: top; }
.meta { display: flex; align-items: center; gap: 13.200px; font-size: 13.100px; color: #8200db; white-space: nowrap; }
.meta span { margin-top: -1px; }
.edit { width: 66px; height: 40px; padding-bottom: 1px; border: 1px solid #e2e2e6; border-radius: 8.800px; background: #fff; color: #0f172b; box-shadow: 0 1.100px 2.200px rgba(0,0,0,.05); }
.del { width: 92px; height: 40px; padding-bottom: 1px; border-radius: 20px; background: #e7000b; color: #fff; box-shadow: 0 1.100px 3.300px rgba(0,0,0,.1); }

/* overlays on the page */
.toast { position: absolute; left: 1487px; top: 26px; width: 392px; height: 59px; border-radius: 8px; background: #000d1f; border: 1px solid #0b1c33; box-shadow: 0 4px 12px rgba(0,0,0,.1); display: flex; align-items: center; padding: 1px 0 0 15px; gap: 10px; color: #5896f3; font-family: "Noto Sans", sans-serif; font-size: 14.300px; letter-spacing: -.17px; }
.toast .msg { padding-bottom: 2px; }
.toast .close { position: absolute; left: -8px; top: -8px; width: 22px; height: 22px; border-radius: 50%; background: #000d1f; border: 1px solid #13233c; display: grid; place-items: center; }
.nextdev { position: absolute; left: 21px; top: 810px; width: 42px; height: 42px; border-radius: 50%; background: #322f35; border: 1px solid #000; box-shadow: inset 0 0 0 1.500px #555, 0 16px 32px -8px rgba(0,0,0,.24); display: grid; place-items: center; }
.scrollbar { width: 15px; background: #2c2c2c; display: flex; flex-direction: column; align-items: center; padding: 6px 0; }
.up { border: 4.500px solid transparent; border-top: 0; border-bottom: 5px solid #9f9f9f; }
.thumb { width: 9px; height: 716px; margin-top: 53px; border-radius: 5px; background: #9f9f9f; }
.down { border: 4.500px solid transparent; border-bottom: 0; border-top: 5px solid #9f9f9f; margin-top: auto; }

/* dock */
.dock { height: 54px; background: linear-gradient(90deg, #101012 18%, #0e1723 24%, #0f1824 38%, #0b1320 50%, #0c1018 66%, #101012 76%); display: flex; align-items: center; padding-left: 6px; }
.app { width: 48px; height: 48px; margin-right: 4px; border-radius: 10px; display: grid; place-items: center; position: relative; }
.app svg { width: 36px; height: 36px; }
.focus { background: #39393b; }
.run::after { content: ""; position: absolute; left: 22px; bottom: 0; width: 4px; height: 4px; border-radius: 50%; background: #0b74e5; }
.rule { width: 1px; height: 36px; margin: 0 2px 0 -1px; background: #3c4148; }
.rule + .app { margin-left: 1px; }
.ubuntu { margin: 0 16px 0 auto; }
```
